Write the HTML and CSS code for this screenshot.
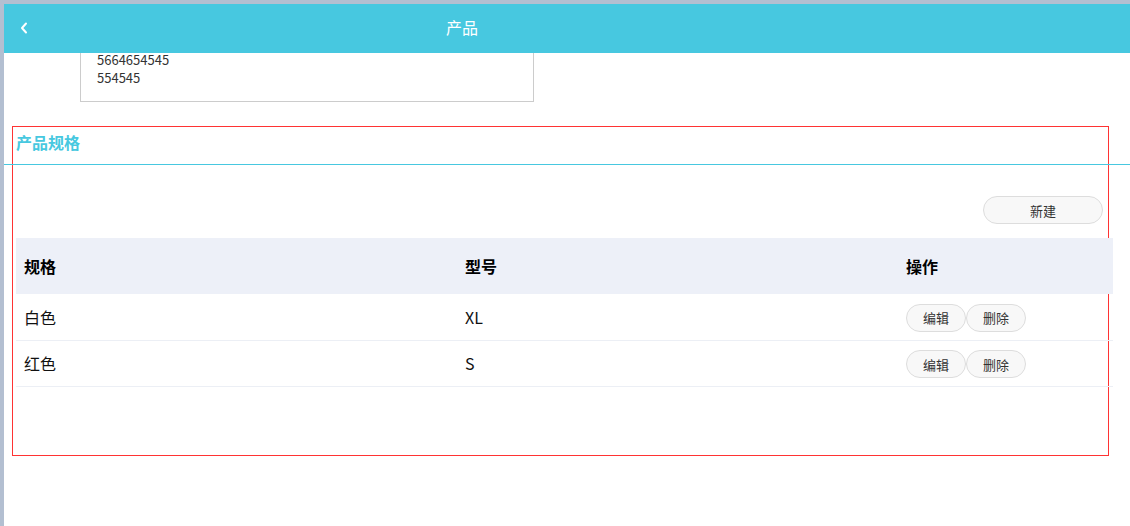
FILE: index.html
```html
<!DOCTYPE html>
<html lang="zh-CN">
<head>
  <meta charset="UTF-8">
  <title>产品</title>
  <meta name="viewport" content="width=device-width, initial-scale=1.0">
  <link rel="stylesheet" href="styles.css">
</head>
<body>
  <div class="app">
    <div class="nav-bar">
      <a class="nav-back" href="#">
        <svg width="8" height="12" viewBox="0 0 8 12"><path d="M6 1.5 L2 6 L6 10.5" fill="none" stroke="#fff" stroke-width="2" stroke-linecap="round" stroke-linejoin="round"/></svg>
      </a>
      <div class="nav-title">产品</div>
    </div>

    <div class="info-card">
      <div>5664654545</div>
      <div>554545</div>
    </div>

    <!-- 产品规格 -->
    <div class="spec-section">
      <div class="spec-title">产品规格</div>
      <div class="spec-toolbar">
        <button class="pill-btn add-btn">新建</button>
      </div>
      <table class="spec-table">
        <thead>
          <tr><th class="col-a">规格</th><th class="col-b">型号</th><th>操作</th></tr>
        </thead>
        <tbody>
          <tr>
            <td>白色</td><td>XL</td>
            <td><button class="pill-btn">编辑</button><button class="pill-btn">删除</button></td>
          </tr>
          <tr>
            <td>红色</td><td>S</td>
            <td><button class="pill-btn">编辑</button><button class="pill-btn">删除</button></td>
          </tr>
        </tbody>
      </table>
    </div>
  </div>
</body>
</html>
```
FILE: styles.css
```css
html, body {
  margin: 0; padding: 0;
  width: 100vw; height: 100vh;
  overflow: hidden;
}
body {
  background: #b3bfd1;
  padding: 4px 0 0 4px;
  box-sizing: border-box;
  font-family: "Noto Sans CJK SC", "Noto Sans", sans-serif;
  color: #111;
}
.app {
  background: #fff;
  height: 100%;
  overflow: hidden;
}
.nav-bar {
  position: relative;
  z-index: 2;
  height: 49px;
  background: #47c8e0;
  display: flex;
  align-items: center;
}
.nav-back {
  position: absolute;
  left: 16px; top: 18px;
  display: flex;
}
.nav-title {
  width: 916px;
  text-align: center;
  color: #fff;
  font-size: 16px;
  line-height: 40px;
  padding-bottom: 4px;
}
.info-card {
  margin: -2px 0 0 76px;
  width: 454px;
  box-sizing: border-box;
  border: 1px solid #ccc;
  border-top: none;
  padding: 0 16px 14px 16px;
  font-size: 13px;
  line-height: 18px;
  color: #333;
}
.spec-section {
  margin: 24px 0 0 8px;
  width: 1097px;
  height: 330px;
  box-sizing: border-box;
  border: 1px solid #f33;
}
.spec-title {
  height: 38px;
  line-height: 31px;
  font-size: 16px;
  font-weight: bold;
  color: #47c8e0;
  border-bottom: 1px solid #47c8e0;
  margin: 0 -40px 0 -9px;
  padding-left: 12px;
  box-sizing: border-box;
}
.spec-toolbar {
  display: flex;
  justify-content: flex-end;
  padding: 31px 5px 14px 0;
}
.pill-btn {
  width: 60px;
  height: 28px;
  border: 1px solid #ddd;
  border-radius: 14px;
  background: #f8f8f8;
  color: #333;
  font-family: inherit;
  font-size: 13px;
  padding: 0;
  cursor: pointer;
}
.add-btn {
  width: 120px;
}
.spec-table {
  margin-left: 3px;
  width: 1097px;
  border-collapse: collapse;
  table-layout: fixed;
  font-size: 16px;
}
.spec-table .col-a, .spec-table .col-b { width: 441px; }
.spec-table th {
  background: #edf0f8;
  height: 56px;
  box-sizing: border-box;
  text-align: left;
  padding: 0 0 0 8px;
  font-weight: bold;
  color: #000;
}
.spec-table td {
  height: 46px;
  box-sizing: border-box;
  padding: 0 0 0 8px;
  border-bottom: 1px solid #eceff5;
  color: #111;
}
.spec-table td .pill-btn { vertical-align: middle; margin-top: 2px; }
```
